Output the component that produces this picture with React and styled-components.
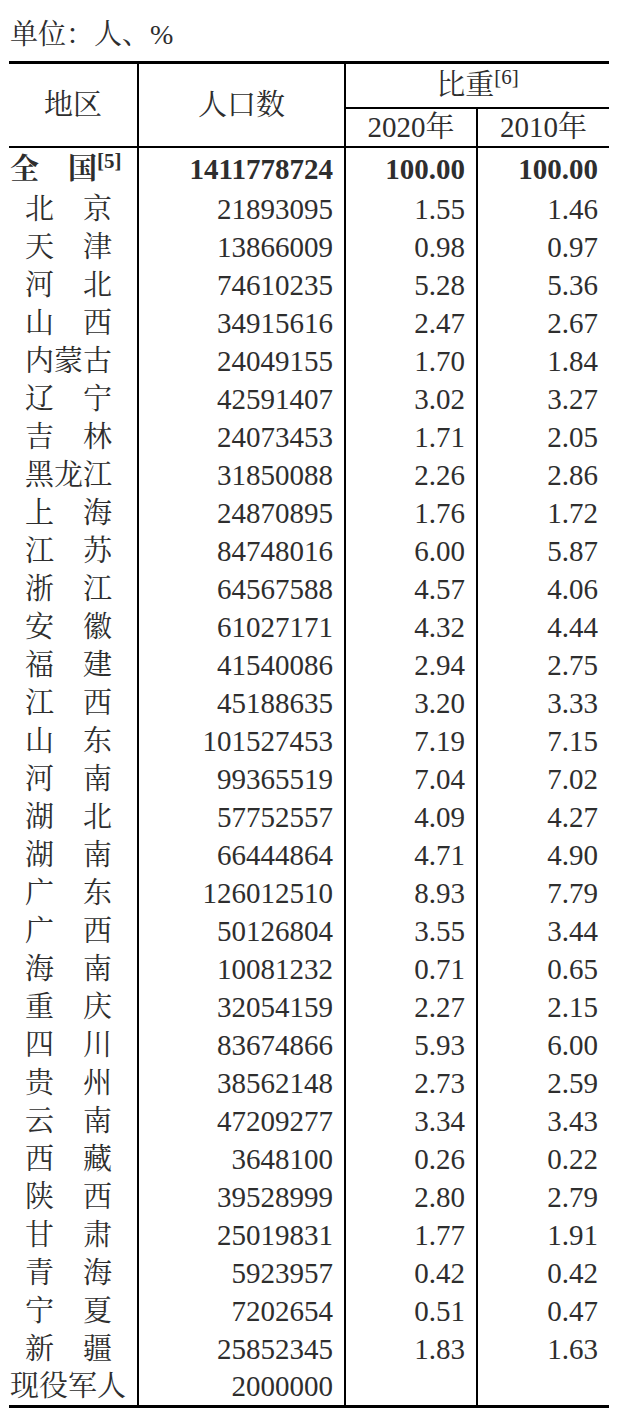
import React from "react";
import styled, { createGlobalStyle } from "styled-components";

const GlobalStyle = createGlobalStyle`
  body {
    margin: 0;
    background: #fff;
    color: #2e2e2e;
    font-family: "Liberation Serif", "Noto Serif CJK SC", "Noto Sans CJK SC", serif;
  }
`;

const Page = styled.div`
  width: 625px;
  height: 1423px;
  overflow: hidden;
`;

const Unit = styled.div`
  height: 61px;
  padding-left: 10px;
  box-sizing: border-box;
  font-size: 28px;
  line-height: 70px;
`;

const Table = styled.table`
  margin-left: 9px;
  width: 600px;
  table-layout: fixed;
  border-collapse: collapse;
  border-top: 3px solid #000;
  border-bottom: 3px solid #000;
  font-size: 29px;
`;

const HeadCell = styled.th`
  font-weight: normal;
  text-align: center;
  padding: 0;
  height: ${p => p.$h}px;
  line-height: 1;
  border-left: ${p => (p.$first ? "none" : "2px solid #000")};
  border-bottom: 2px solid #000;
  vertical-align: middle;
`;

const Cell = styled.td`
  padding: 0 ${p => (p.$num ? 11 : 0)}px 0 ${p => p.$indent || 0}px;
  height: ${p => p.$h}px;
  line-height: 1;
  text-align: ${p => (p.$num ? "right" : "left")};
  font-weight: ${p => (p.$bold ? "bold" : "normal")};
  border-left: ${p => (p.$first ? "none" : "2px solid #000")};
  white-space: nowrap;
  vertical-align: middle;
  box-sizing: border-box;
`;

const Sup = styled.sup`
  font-size: 21px;
  font-weight: ${p => (p.$bold ? "bold" : "normal")};
  vertical-align: top;
  line-height: 1;
  position: relative;
  top: ${p => p.$top}px;
`;

const rows = [
  ["北　京", "21893095", "1.55", "1.46"],
  ["天　津", "13866009", "0.98", "0.97"],
  ["河　北", "74610235", "5.28", "5.36"],
  ["山　西", "34915616", "2.47", "2.67"],
  ["内蒙古", "24049155", "1.70", "1.84"],
  ["辽　宁", "42591407", "3.02", "3.27"],
  ["吉　林", "24073453", "1.71", "2.05"],
  ["黑龙江", "31850088", "2.26", "2.86"],
  ["上　海", "24870895", "1.76", "1.72"],
  ["江　苏", "84748016", "6.00", "5.87"],
  ["浙　江", "64567588", "4.57", "4.06"],
  ["安　徽", "61027171", "4.32", "4.44"],
  ["福　建", "41540086", "2.94", "2.75"],
  ["江　西", "45188635", "3.20", "3.33"],
  ["山　东", "101527453", "7.19", "7.15"],
  ["河　南", "99365519", "7.04", "7.02"],
  ["湖　北", "57752557", "4.09", "4.27"],
  ["湖　南", "66444864", "4.71", "4.90"],
  ["广　东", "126012510", "8.93", "7.79"],
  ["广　西", "50126804", "3.55", "3.44"],
  ["海　南", "10081232", "0.71", "0.65"],
  ["重　庆", "32054159", "2.27", "2.15"],
  ["四　川", "83674866", "5.93", "6.00"],
  ["贵　州", "38562148", "2.73", "2.59"],
  ["云　南", "47209277", "3.34", "3.43"],
  ["西　藏", "3648100", "0.26", "0.22"],
  ["陕　西", "39528999", "2.80", "2.79"],
  ["甘　肃", "25019831", "1.77", "1.91"],
  ["青　海", "5923957", "0.42", "0.42"],
  ["宁　夏", "7202654", "0.51", "0.47"],
  ["新　疆", "25852345", "1.83", "1.63"],
];

export default function App() {
  return (
    <Page>
      <GlobalStyle />
      <Unit>单位：人、%</Unit>
      <Table>
        <colgroup>
          <col style={{ width: 129 }} />
          <col style={{ width: 207 }} />
          <col style={{ width: 132 }} />
          <col style={{ width: 132 }} />
        </colgroup>
        <thead>
          <tr>
            <HeadCell $first rowSpan={2} $h={82}>地区</HeadCell>
            <HeadCell rowSpan={2} $h={82}>人口数</HeadCell>
            <HeadCell colSpan={2} $h={43}>
              比重<Sup $top={-4}>[6]</Sup>
            </HeadCell>
          </tr>
          <tr>
            <HeadCell $h={37}>2020年</HeadCell>
            <HeadCell $h={37}>2010年</HeadCell>
          </tr>
        </thead>
        <tbody>
          <tr>
            <Cell $first $bold $indent={1} $h={43}>
              全　国<Sup $bold $top={-4}>[5]</Sup>
            </Cell>
            <Cell $num $bold $h={43}>1411778724</Cell>
            <Cell $num $bold $h={43}>100.00</Cell>
            <Cell $num $bold $h={43}>100.00</Cell>
          </tr>
          {rows.map(([name, pop, a, b]) => (
            <tr key={name}>
              <Cell $first $indent={16} $h={38}>{name}</Cell>
              <Cell $num $h={38}>{pop}</Cell>
              <Cell $num $h={38}>{a}</Cell>
              <Cell $num $h={38}>{b}</Cell>
            </tr>
          ))}
          <tr>
            <Cell $first $indent={1} $h={38}>现役军人</Cell>
            <Cell $num $h={38}>2000000</Cell>
            <Cell $num $h={38}></Cell>
            <Cell $num $h={38}></Cell>
          </tr>
        </tbody>
      </Table>
    </Page>
  );
}
